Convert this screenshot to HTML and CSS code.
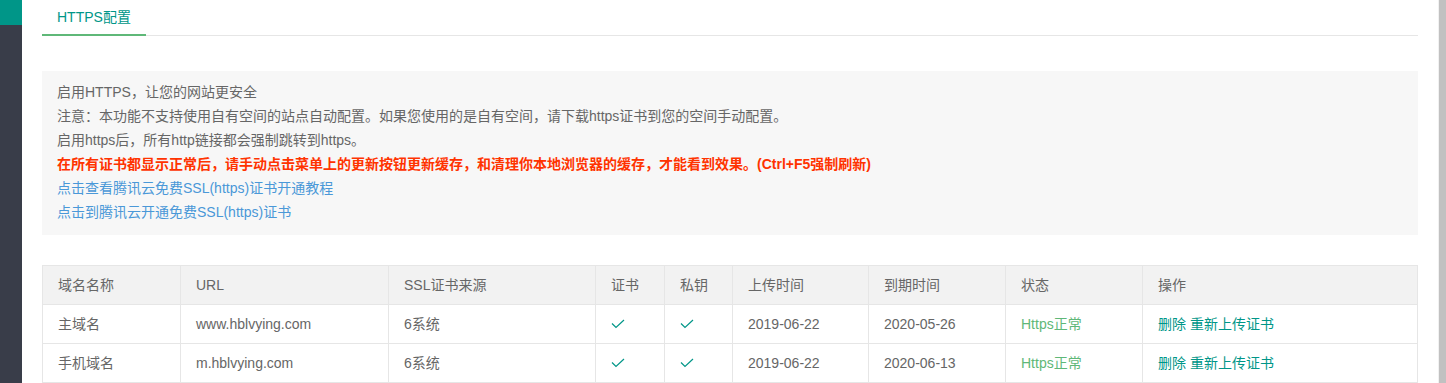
FILE: index.html
```html
<!DOCTYPE html>
<html lang="zh-CN">
<head>
    <meta charset="UTF-8">
    <title>HTTPS配置</title>
    <link rel="stylesheet" href="styles.css">
</head>
<body>
    <div class="side">
        <div class="side-logo"></div>
    </div>

    <div class="main">
        <div class="tab-title">
            <div class="tab-item active">HTTPS配置</div>
        </div>

        <div class="quote">
            <p>启用HTTPS，让您的网站更安全</p>
            <p>注意：本功能不支持使用自有空间的站点自动配置。如果您使用的是自有空间，请下载https证书到您的空间手动配置。</p>
            <p>启用https后，所有http链接都会强制跳转到https。</p>
            <p class="warn">在所有证书都显示正常后，请手动点击菜单上的更新按钮更新缓存，和清理你本地浏览器的缓存，才能看到效果。(Ctrl+F5强制刷新)</p>
            <p><a class="link" href="#">点击查看腾讯云免费SSL(https)证书开通教程</a></p>
            <p><a class="link" href="#">点击到腾讯云开通免费SSL(https)证书</a></p>
        </div>

        <table class="cert-table">
            <colgroup>
                <col class="c-name">
                <col class="c-url">
                <col class="c-src">
                <col class="c-cert">
                <col class="c-key">
                <col class="c-up">
                <col class="c-exp">
                <col class="c-state">
                <col class="c-op">
            </colgroup>
            <thead>
                <tr>
                    <th>域名名称</th>
                    <th>URL</th>
                    <th>SSL证书来源</th>
                    <th>证书</th>
                    <th>私钥</th>
                    <th>上传时间</th>
                    <th>到期时间</th>
                    <th>状态</th>
                    <th>操作</th>
                </tr>
            </thead>
            <tbody>
                <tr>
                    <td>主域名</td>
                    <td>www.hblvying.com</td>
                    <td>6系统</td>
                    <td><svg class="check" width="14" height="10" viewBox="0 0 14 10"><polyline points="1,4.5 5,8.5 13,1" /></svg></td>
                    <td><svg class="check" width="14" height="10" viewBox="0 0 14 10"><polyline points="1,4.5 5,8.5 13,1" /></svg></td>
                    <td>2019-06-22</td>
                    <td>2020-05-26</td>
                    <td class="ok">Https正常</td>
                    <td><a class="op" href="#">删除</a> <a class="op" href="#">重新上传证书</a></td>
                </tr>
                <tr>
                    <td>手机域名</td>
                    <td>m.hblvying.com</td>
                    <td>6系统</td>
                    <td><svg class="check" width="14" height="10" viewBox="0 0 14 10"><polyline points="1,4.5 5,8.5 13,1" /></svg></td>
                    <td><svg class="check" width="14" height="10" viewBox="0 0 14 10"><polyline points="1,4.5 5,8.5 13,1" /></svg></td>
                    <td>2019-06-22</td>
                    <td>2020-06-13</td>
                    <td class="ok">Https正常</td>
                    <td><a class="op" href="#">删除</a> <a class="op" href="#">重新上传证书</a></td>
                </tr>
            </tbody>
        </table>
    </div>

    <div class="scrollbar"></div>
</body>
</html>
```

FILE: styles.css
```css
* {
    margin: 0;
    padding: 0;
    box-sizing: border-box;
}

body {
    font-family: 'Liberation Sans', Arial, 'Noto Sans CJK SC', sans-serif;
    font-size: 14px;
    color: #666;
    background: #fff;
    display: flex;
    height: 100vh;
    overflow: hidden;
}

.side {
    width: 22px;
    flex: none;
    background: #393d49;
}

.side-logo {
    height: 25px;
    background: #009688;
}

.main {
    flex: 1;
    padding: 0 20px;
}

.scrollbar {
    width: 8px;
    flex: none;
    background: #c1c1c1;
    border-left: 1px solid #f1f1f1;
}

.tab-title {
    display: flex;
    height: 36px;
    border-bottom: 1px solid #e6e6e6;
}

.tab-item {
    padding: 0 15px;
    line-height: 34px;
    height: 36px;
    color: #333;
}

.tab-item.active {
    color: #009688;
    border-bottom: 2px solid #5fb878;
}

.quote {
    margin-top: 35px;
    background: #f7f7f7;
    padding: 9px 15px 11px;
}

.quote p {
    line-height: 24px;
    white-space: nowrap;
}

.quote .warn {
    color: #ff3300;
    font-weight: bold;
}

.link {
    color: #4a98d8;
    text-decoration: none;
}

.cert-table {
    margin-top: 30px;
    width: 100%;
    border-collapse: collapse;
    table-layout: fixed;
}

.c-name { width: 138px; }
.c-url { width: 208px; }
.c-src { width: 207px; }
.c-cert { width: 69px; }
.c-key { width: 68px; }
.c-up { width: 136px; }
.c-exp { width: 137px; }
.c-state { width: 137px; }

.cert-table th,
.cert-table td {
    border: 1px solid #e6e6e6;
    padding: 9px 15px;
    line-height: 20px;
    text-align: left;
    font-weight: normal;
    white-space: nowrap;
}

.cert-table thead tr {
    background: #f2f2f2;
}

.check {
    display: block;
    fill: none;
    stroke: #009688;
    stroke-width: 1.2;
}

.ok {
    color: #5fb878;
}

.op {
    color: #009688;
    text-decoration: none;
}
```
